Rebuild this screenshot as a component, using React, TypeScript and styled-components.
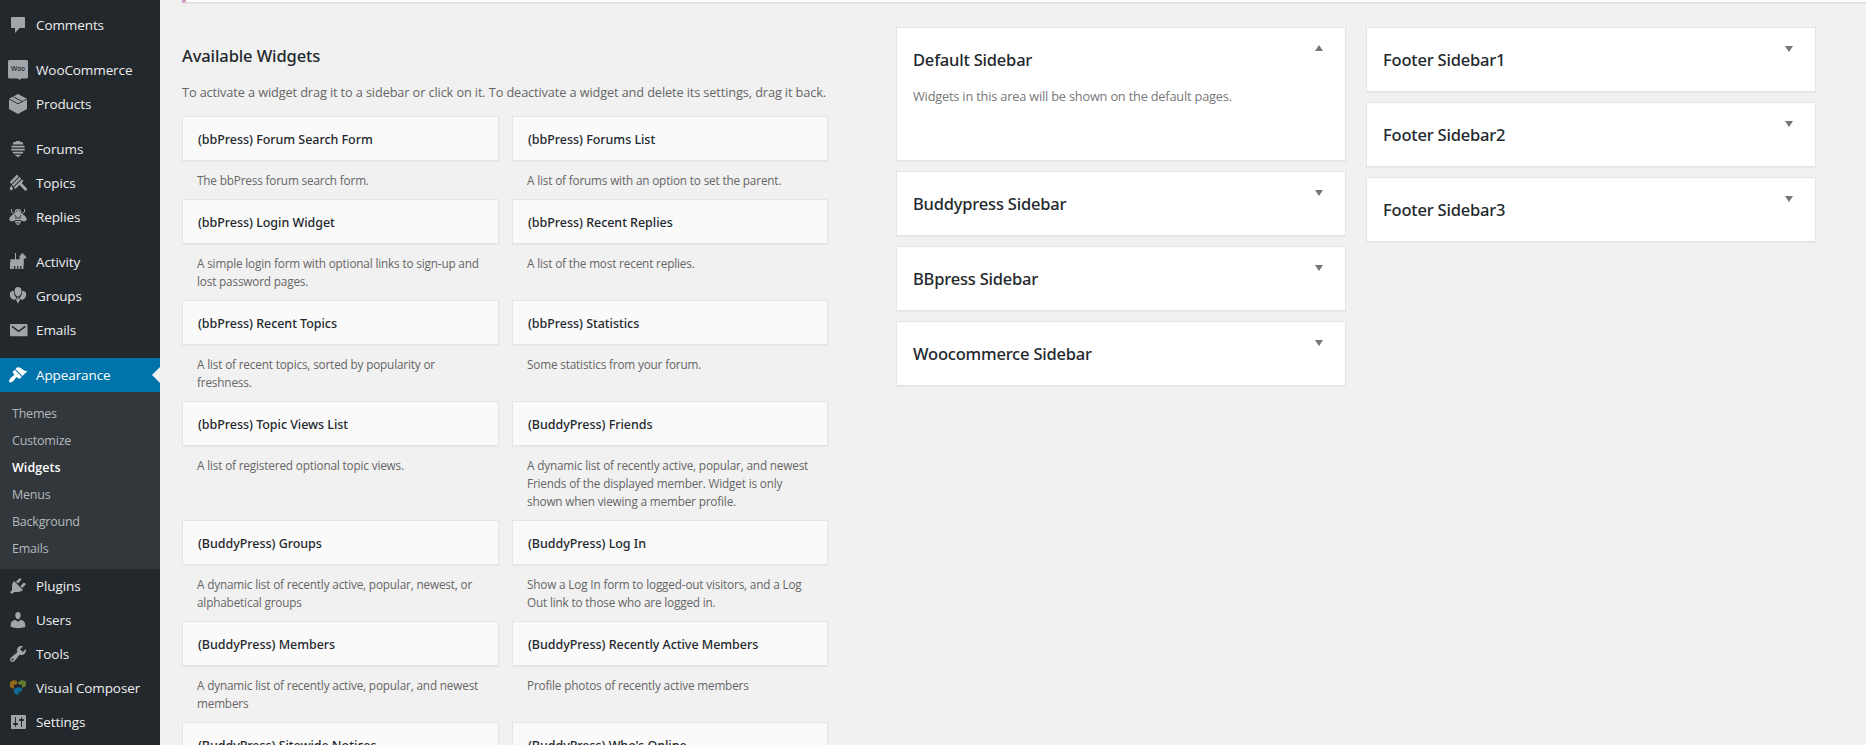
import React from "react";
import styled, { createGlobalStyle, css } from "styled-components";

const GlobalStyle = createGlobalStyle`
  *, *::before, *::after { box-sizing: border-box; }
  html, body { margin: 0; padding: 0; height: 100%; overflow: hidden; }
  body {
    background: #f1f1f1;
    color: #444;
    font-family: "Open Sans", "Noto Sans", sans-serif;
    font-size: 12.75px;
  }
  h2, h3, p, ul { margin: 0; padding: 0; font-weight: 400; list-style: none; }
  a { color: inherit; text-decoration: none; }
`;

/* ---------- Layout ---------- */

const Page = styled.div`
  display: flex;
  width: 100%;
  height: 745px;
  overflow: hidden;
`;

const AdminMenu = styled.nav`
  flex: 0 0 160px;
  padding-top: 8px;
  background: #23282d;
`;

const Content = styled.main`
  flex: 1;
  min-width: 0;
  padding-left: 22px;
`;

/* ---------- Admin menu ---------- */

const MenuGroup = styled.ul`
  & + & { margin-top: 11px; }
`;

const MenuLink = styled.a<{ $current?: boolean }>`
  position: relative;
  display: flex;
  align-items: center;
  gap: 8px;
  height: 34px;
  padding-left: 8px;
  color: #eee;
  font-size: 13.5px;
  letter-spacing: -0.1px;
  line-height: 18px;
  white-space: nowrap;

  ${({ $current }) =>
    $current &&
    css`
      background: #0073aa;
      color: #fff;

      &::after {
        content: "";
        position: absolute;
        right: 0;
        top: 9px;
        border: 8px solid transparent;
        border-right-color: #f1f1f1;
        border-left-width: 0;
      }
    `}
`;

const Icon = styled.svg<{ $active?: boolean }>`
  flex: none;
  width: 20px;
  height: 20px;
  color: ${({ $active }) => ($active ? "#fff" : "#a0a5aa")};
  fill: currentColor;
`;

const IconText = styled.text`
  fill: #23282d;
  font-family: "Open Sans", sans-serif;
  font-size: 6.6px;
  font-weight: 600;
`;

const Submenu = styled.ul`
  padding: 8px 0 7px;
  background: #32373c;
`;

const SubmenuLink = styled.a<{ $current?: boolean }>`
  display: block;
  height: 27px;
  padding-left: 12px;
  color: ${({ $current }) => ($current ? "#fff" : "#b4b9be")};
  font-size: 12.5px;
  font-weight: ${({ $current }) => ($current ? 600 : 400)};
  letter-spacing: ${({ $current }) => ($current ? "0.05px" : "-0.22px")};
  line-height: 27px;
`;

/* ---------- Content ---------- */

const Notice = styled.div`
  height: 3px;
  border-left: 4px solid #cc99c2;
  border-bottom: 1px solid #dedede;
  background: #fff;
  box-shadow: 0 1px 1px rgba(0, 0, 0, 0.05);
`;

const Columns = styled.div`
  display: flex;
  align-items: flex-start;
  padding-top: 24px;
`;

const Available = styled.section`
  width: 646px;
  margin-right: 68px;
`;

const SectionTitle = styled.h2`
  padding-top: 17px;
  color: #23282d;
  font-family: "Noto Sans", sans-serif;
  font-size: 16.5px;
  font-weight: 500;
  letter-spacing: -0.11px;
  line-height: 24px;
`;

const SectionHint = styled.p`
  margin: 15px 0 14px;
  color: #666;
  letter-spacing: -0.12px;
  line-height: 19px;
  white-space: nowrap;
`;

const WidgetGrid = styled.div`
  display: grid;
  grid-template-columns: 317px 316px;
  column-gap: 13px;
`;

const WidgetTitle = styled.h3`
  height: 45px;
  padding-left: 15px;
  border: 1px solid #e5e5e5;
  background: #fafafa;
  box-shadow: 0 1px 1px rgba(0, 0, 0, 0.04);
  color: #23282d;
  font-family: "Noto Sans", sans-serif;
  font-size: 12.5px;
  font-weight: 500;
  letter-spacing: -0.04px;
  line-height: 45px;
  white-space: nowrap;
`;

const WidgetText = styled.p`
  padding: 10px 15px;
  color: #666;
  font-size: 11.75px;
  letter-spacing: -0.16px;
  line-height: 18px;
  white-space: pre-line;
`;

const Areas = styled.section`
  display: grid;
  grid-template-columns: 450px 450px;
  column-gap: 20px;
  align-items: start;
`;

const AreaColumn = styled.div`
  display: flex;
  flex-direction: column;
  gap: 10px;
`;

const Area = styled.article<{ $open?: boolean }>`
  display: flex;
  justify-content: space-between;
  height: ${({ $open }) => ($open ? 134 : 65)}px;
  padding: ${({ $open }) => ($open ? 17 : 18)}px 22px 0 16px;
  border: 1px solid #e5e5e5;
  background: #fff;
  box-shadow: 0 1px 1px rgba(0, 0, 0, 0.04);
`;

const AreaTitle = styled.h3<{ $open?: boolean }>`
  margin-top: ${({ $open }) => ($open ? 3 : 2)}px;
  color: #23282d;
  font-family: "Noto Sans", sans-serif;
  font-size: 16.5px;
  font-weight: 500;
  letter-spacing: -0.2px;
  line-height: 24px;
`;

const AreaText = styled.p`
  margin-top: 15px;
  color: #777;
  letter-spacing: -0.18px;
  line-height: 19px;
`;

const Toggle = styled.svg`
  width: 8px;
  height: 6px;
  fill: #72777c;
`;

/* ---------- Icons ---------- */

const glyphs: Record<string, React.ReactNode> = {
  comments: <path d="M4 2h12c.6 0 1 .4 1 1v9c0 .6-.4 1-1 1h-4.200L7 18v-5H4c-.6 0-1-.4-1-1V3c0-.6.4-1 1-1z" />,
  woo: (
    <>
      <path d="M1.500 0h17c.8 0 1.500.7 1.500 1.500v15.500c0 .8-.7 1.500-1.500 1.500H13l-1 1.500-2.500-1.500h-8C.7 18.500 0 17.800 0 17V1.500C0 .7.7 0 1.500 0z" />
      <IconText x="3" y="11.200" textLength="14" lengthAdjust="spacingAndGlyphs">Woo</IconText>
    </>
  ),
  products: (
    <>
      <path d="M10 0l9 4.700v10.300L10 20l-9-5V4.700z" />
      <path d="M1 5l9 4.800L19 5M5.300 2.800l9 4.700" fill="none" stroke="#23282d" strokeWidth="0.9" />
    </>
  ),
  forums: (
    <path d="M8.300 2h3.400l.8 1h1.700l1 1.400v1H4.800v-1l1-1.400h1.700zM4.200 6.800h11.600a.9.900 0 0 1 0 1.800H4.200a.9.900 0 0 1 0-1.800zM3.900 9.800h12.200a.9.900 0 0 1 0 1.800H3.900a.9.900 0 0 1 0-1.800zM5.700 12.800h8.600a.9.900 0 0 1 0 1.800H5.700a.9.900 0 0 1 0-1.800zM7 15.700h6l-.8 1.400h-.9l-.6.900H9.300l-.6-.9h-.9z" />
  ),
  topics: (
    <>
      <path d="M9 1.600l1.800 1.800-7.500 7.500-1.500-1.800zM11.700 4.100l1.500 1.600-7.800 7.700-1.500-1.600zM14 6.400l1.500 1.600-1.900 2 5.200 5.300c1 1.300-.6 3-2 2.100L11.500 12l-4.100 4-1.500-1.700z" />
      <path d="M3.200 12.600c1.100 1.400 1.600 2.100 1.600 3.200 0 2-3 2-3 0 0-1.100.5-1.800 1.400-3.200z" />
    </>
  ),
  replies: (
    <>
      <path d="M7.300 3.300a1.500 1.500 0 0 1 2.600-.9h.2a1.500 1.500 0 0 1 2.600.9c.8.7.8 2.100-.2 2.900 1.300.3 4 1.600 5.700 4.200 1.300 2.200.2 4.500-3 3.800l-1.900-.8c-.5 2.300-1.500 4-3.300 4.800-1.800-.8-2.800-2.500-3.300-4.800l-1.900.8c-3.200.7-4.300-1.600-3-3.800 1.700-2.600 4.400-3.900 5.700-4.200-1-.8-1-2.200-.2-2.900z" />
      <path d="M3.500 2v3l3.300 1.800M16.500 2v3l-3.300 1.800" fill="none" stroke="currentColor" strokeWidth="1" />
      <path d="M7 11h6M7 13.500h6M8.300 15.900h3.400M8.500 3.300v1.200M11.500 3.300v1.200M6.800 8l1.500 2M13.200 8l-1.500 2" fill="none" stroke="#23282d" strokeWidth="0.9" />
    </>
  ),
  activity: (
    <path d="M7 1h1v6.200h3.500V3.800L13 3V1.500h2.400L16 3.200h1l1.200 1.900v1.500h-2.400V11l-.4 6h-2v-3h-1.200v3h-1.900v-3h-1.100v3H7.300v-3H6.100v3H4.200v-3l-.4 3H2v-5.500L2.600 9 1.800 8.300l1-1.100H7z" />
  ),
  groups: (
    <>
      <path d="M4.700 5c.6 0 .8.1 1.200.3 0 3 1 5.200 2.700 6.700-.4.800-1 1.300-2 1.300l-.4 1-1.200-.8C3 13 1.800 10.300 1.800 8.200 1.800 6.300 3 5 4.700 5zM15.300 5c-.6 0-.8.1-1.200.3 0 3-1 5.200-2.700 6.700.4.800 1 1.300 2 1.300l.4 1 1.200-.8c2-.5 3.200-3.200 3.200-5.300C18.200 6.300 17 5 15.300 5z" />
      <path d="M10 1c2.200 0 3.500 1.600 3.500 3.800 0 2.600-1.400 5.700-3.500 5.700S6.500 7.400 6.500 4.800C6.500 2.600 7.800 1 10 1z" />
      <path d="M9.500 11h1l.3 2.200 1.700-.3L10 17.500l-2.500-4.600 1.700.3z" />
    </>
  ),
  emails: (
    <>
      <rect x="2" y="4" width="17.500" height="12.200" rx="0.800" />
      <path d="M4 6.300l6.700 5 6.700-5" fill="none" stroke="#23282d" strokeWidth="1.500" />
    </>
  ),
  appearance: (
    <path d="M14.480 11.060L7.410 3.990l1.500-1.500c.5-.56 2.300-.47 3.510.32 1.210.8 1.430 1.280 2.910 2.100 1.180.64 2.450 1.260 4.450.85zm-.71.71L6.700 4.700 4.930 6.470c-.39.39-.39 1.020 0 1.410l1.060 1.060c.39.39.39 1.030 0 1.420-.6.6-1.430 1.110-2.210 1.690-.35.26-.7.53-1.010.84C1.430 14.230.4 16.080 1.400 17.070c.99 1 2.840-.03 4.180-1.360.31-.31.58-.66.85-1.020.57-.78 1.080-1.610 1.690-2.210.39-.39 1.020-.39 1.410 0l1.060 1.060c.39.39 1.020.39 1.410 0z" />
  ),
  plugins: (
    <path d="M13.110 4.360L9.870 7.600 8 5.730l3.240-3.240c.35-.34 1.050-.2 1.560.32.52.51.66 1.210.31 1.550zm-8 1.770l.91-1.120 9.010 9.010-1.190.84c-.71.71-2.630 1.160-3.820 1.160H6.140L4.900 17.260c-.59.59-1.540.59-2.120 0-.59-.58-.59-1.530 0-2.120l1.240-1.240v-3.880c0-1.130.4-3.190 1.090-3.890zm7.260 3.970l3.240-3.240c.34-.35 1.040-.21 1.550.31.52.51.66 1.210.31 1.550l-3.240 3.250z" />
  ),
  users: (
    <path d="M10 9.250c-2.270 0-2.730-3.440-2.730-3.440C7 4.020 7.820 2 9.970 2c2.160 0 2.980 2.020 2.710 3.810 0 0-.41 3.440-2.680 3.440zm0 2.570L12.720 10c2.390 0 4.520 2.330 4.520 4.530v2.490s-3.650 1.130-7.240 1.130c-3.650 0-7.240-1.130-7.240-1.130v-2.490c0-2.250 1.940-4.480 4.470-4.480z" />
  ),
  tools: (
    <path d="M16.680 9.770c-1.340 1.340-3.300 1.670-4.950.99l-5.410 6.520c-.99.99-2.590.99-3.580 0s-.99-2.590 0-3.570l6.520-5.420c-.68-1.650-.35-3.610.99-4.950 1.280-1.280 3.120-1.620 4.720-1.060l-2.890 2.890 2.820 2.820 2.860-2.870c.53 1.580.18 3.390-1.080 4.650zM3.810 16.210c.4.39 1.040.39 1.430 0 .4-.4.4-1.040 0-1.430-.39-.4-1.030-.4-1.430 0-.39.39-.39 1.030 0 1.430z" />
  ),
  composer: (
    <>
      <path d="M2 4l4-2 3 1v3l-3 1v4l-4-2z" fill="#94691c" />
      <path d="M10 4l4-2 4 1.500v4.500l-4 2V7l-4-1z" fill="#5f7a30" />
      <path d="M6 11l4-2 4 1v3l-3.500 1.500v3L6 15z" fill="#126a94" />
    </>
  ),
  settings: (
    <path d="M18 16V4c0-.55-.45-1-1-1H4c-.55 0-1 .45-1 1v12c0 .55.45 1 1 1h13c.55 0 1-.45 1-1zM8 11h1c.55 0 1 .45 1 1s-.45 1-1 1H8v1.500c0 .28-.22.5-.5.5s-.5-.22-.5-.5V13H6c-.55 0-1-.45-1-1s.45-1 1-1h1V5.500c0-.28.22-.5.5-.5s.5.22.5.500V11zm5-2h-1c-.55 0-1-.45-1-1s.45-1 1-1h1V5.500c0-.28.22-.5.5-.5s.5.22.5.500V7h1c.55 0 1 .45 1 1s-.45 1-1 1h-1v5.500c0 .28-.22.5-.5.5s-.5-.22-.5-.500V9z" />
  ),
};

/* ---------- Data ---------- */

type Entry = { icon: string; label: string; pages?: string[] };

const menu: Entry[][] = [
  [{ icon: "comments", label: "Comments" }],
  [
    { icon: "woo", label: "WooCommerce" },
    { icon: "products", label: "Products" },
  ],
  [
    { icon: "forums", label: "Forums" },
    { icon: "topics", label: "Topics" },
    { icon: "replies", label: "Replies" },
  ],
  [
    { icon: "activity", label: "Activity" },
    { icon: "groups", label: "Groups" },
    { icon: "emails", label: "Emails" },
  ],
  [
    {
      icon: "appearance",
      label: "Appearance",
      pages: ["Themes", "Customize", "Widgets", "Menus", "Background", "Emails"],
    },
    { icon: "plugins", label: "Plugins" },
    { icon: "users", label: "Users" },
    { icon: "tools", label: "Tools" },
    { icon: "composer", label: "Visual Composer" },
    { icon: "settings", label: "Settings" },
  ],
];

const widgets: [string, string][] = [
  ["(bbPress) Forum Search Form", "The bbPress forum search form."],
  ["(bbPress) Forums List", "A list of forums with an option to set the parent."],
  ["(bbPress) Login Widget", "A simple login form with optional links to sign-up and\nlost password pages."],
  ["(bbPress) Recent Replies", "A list of the most recent replies."],
  ["(bbPress) Recent Topics", "A list of recent topics, sorted by popularity or\nfreshness."],
  ["(bbPress) Statistics", "Some statistics from your forum."],
  ["(bbPress) Topic Views List", "A list of registered optional topic views."],
  [
    "(BuddyPress) Friends",
    "A dynamic list of recently active, popular, and newest\nFriends of the displayed member. Widget is only\nshown when viewing a member profile.",
  ],
  ["(BuddyPress) Groups", "A dynamic list of recently active, popular, newest, or\nalphabetical groups"],
  [
    "(BuddyPress) Log In",
    "Show a Log In form to logged-out visitors, and a Log\nOut link to those who are logged in.",
  ],
  ["(BuddyPress) Members", "A dynamic list of recently active, popular, and newest\nmembers"],
  ["(BuddyPress) Recently Active Members", "Profile photos of recently active members"],
  ["(BuddyPress) Sitewide Notices", ""],
  ["(BuddyPress) Who's Online", ""],
];

const areas = [
  ["Default Sidebar", "Buddypress Sidebar", "BBpress Sidebar", "Woocommerce Sidebar"],
  ["Footer Sidebar1", "Footer Sidebar2", "Footer Sidebar3"],
];

function MenuEntry({ icon, label, pages }: Entry) {
  const current = Boolean(pages);
  return (
    <li>
      <MenuLink $current={current}>
        <Icon viewBox="0 0 20 20" $active={current}>{glyphs[icon]}</Icon>
        {label}
      </MenuLink>
      {pages && (
        <Submenu>
          {pages.map((name) => (
            <li key={name}>
              <SubmenuLink $current={name === "Widgets"}>{name}</SubmenuLink>
            </li>
          ))}
        </Submenu>
      )}
    </li>
  );
}

function WidgetArea({ name }: { name: string }) {
  const open = name === "Default Sidebar";
  return (
    <Area $open={open}>
      <div>
        <AreaTitle $open={open}>{name}</AreaTitle>
        {open && <AreaText>Widgets in this area will be shown on the default pages.</AreaText>}
      </div>
      <Toggle viewBox="0 0 8 6">
        <path d={open ? "M0 6L4 0l4 6z" : "M0 0h8L4 6z"} />
      </Toggle>
    </Area>
  );
}

export default function App() {
  return (
    <Page>
      <GlobalStyle />
      <AdminMenu>
        {menu.map((group) => (
          <MenuGroup key={group[0].label}>
            {group.map((entry) => (
              <MenuEntry key={entry.label} {...entry} />
            ))}
          </MenuGroup>
        ))}
      </AdminMenu>
      <Content>
        <Notice />
        <Columns>
          <Available>
            <SectionTitle>Available Widgets</SectionTitle>
            <SectionHint>
              To activate a widget drag it to a sidebar or click on it. To deactivate a widget and delete its settings,
              drag it back.
            </SectionHint>
            <WidgetGrid>
              {widgets.map(([title, text]) => (
                <div key={title}>
                  <WidgetTitle>{title}</WidgetTitle>
                  <WidgetText>{text}</WidgetText>
                </div>
              ))}
            </WidgetGrid>
          </Available>
          <Areas>
            {areas.map((column) => (
              <AreaColumn key={column[0]}>
                {column.map((name) => (
                  <WidgetArea key={name} name={name} />
                ))}
              </AreaColumn>
            ))}
          </Areas>
        </Columns>
      </Content>
    </Page>
  );
}
